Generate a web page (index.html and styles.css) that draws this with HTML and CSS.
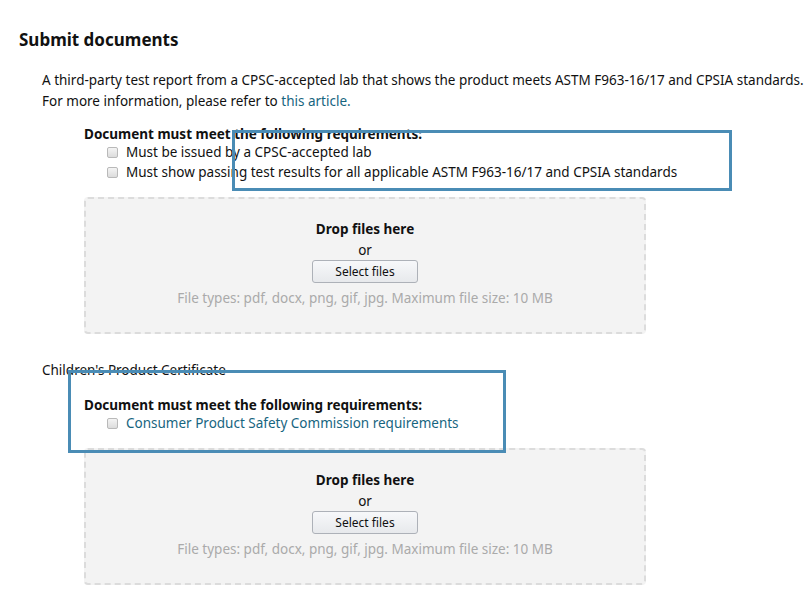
FILE: index.html
```html
<!doctype html>
<html lang="en">
  <head>
    <meta charset="UTF-8" />
    <meta name="viewport" content="width=device-width, initial-scale=1.0" />
    <title>Submit documents</title>
    <link rel="stylesheet" href="styles.css">
  </head>
  <body>
    <div class="page">
      <h1>Submit documents</h1>

      <!-- Test report -->
      <div class="doc">
        <p class="intro">
          A third-party test report from a CPSC-accepted lab that shows the product meets ASTM F963-16/17 and CPSIA standards.<br />
          For more information, please refer to <a href="#">this article.</a>
        </p>

        <div class="reqs">
          <div class="reqs-title">Document must meet the following requirements:</div>
          <label class="req"><input type="checkbox" /> Must be issued by a CPSC-accepted lab</label>
          <label class="req"><input type="checkbox" /> Must show passing test results for all applicable ASTM F963-16/17 and CPSIA standards</label>
        </div>

        <div class="dropzone">
          <div class="drop-title">Drop files here</div>
          <div class="drop-or">or</div>
          <button>Select files</button>
          <div class="drop-hint">File types: pdf, docx, png, gif, jpg. Maximum file size: 10 MB</div>
        </div>
      </div>

      <!-- Certificate -->
      <div class="doc doc-cert">
        <div class="doc-name">Children's Product Certificate</div>

        <div class="reqs">
          <div class="reqs-title">Document must meet the following requirements:</div>
          <label class="req"><input type="checkbox" /> <a href="#">Consumer Product Safety Commission requirements</a></label>
        </div>

        <div class="dropzone">
          <div class="drop-title">Drop files here</div>
          <div class="drop-or">or</div>
          <button>Select files</button>
          <div class="drop-hint">File types: pdf, docx, png, gif, jpg. Maximum file size: 10 MB</div>
        </div>
      </div>
    </div>

    <!-- highlight boxes drawn over the form -->
    <div class="mark mark-one"></div>
    <div class="mark mark-two"></div>
  </body>
</html>
```

FILE: styles.css
```css
body {
  margin: 0;
  font-family: "Noto Sans", Arial, sans-serif;
  font-size: 13.5px;
  color: #111;
  background: #fff;
}
.page {
  padding: 28px 0 0 19px;
}
h1 {
  margin: 0 0 18px;
  font-size: 17px;
  font-weight: bold;
  line-height: 24px;
}
.doc {
  padding-left: 23px;
}
.intro {
  margin: 0 0 12px;
  line-height: 21px;
}
a {
  color: #17657f;
  text-decoration: none;
}
.reqs {
  padding-left: 42px;
  line-height: 20px;
}
.reqs-title {
  font-weight: bold;
  margin-bottom: -2px;
}
.req {
  display: flex;
  align-items: center;
  padding-left: 23px;
}
.req input {
  appearance: none;
  margin: 0 8px 0 0;
  width: 11px;
  height: 11px;
  border: 1px solid #b9b9b9;
  border-radius: 2px;
  background: linear-gradient(#f4f4f4, #dcdcdc);
}
.dropzone {
  margin: 15px 0 0 42px;
  width: 558px;
  height: 133px;
  border: 2px dashed #dcdcdc;
  border-radius: 4px;
  background: #f3f3f3;
  text-align: center;
}
.drop-title {
  margin-top: 20px;
  font-weight: bold;
  line-height: 21px;
}
.drop-or {
  line-height: 20px;
}
button {
  font-family: inherit;
  font-size: 12px;
  width: 106px;
  height: 23px;
  padding: 0;
  color: #111;
  background: linear-gradient(#f7f8fa, #e7e9ec);
  border: 1px solid #adb1b8;
  border-radius: 3px;
  cursor: pointer;
}
.drop-hint {
  margin-top: 5px;
  color: #aaa;
  line-height: 20px;
}
.doc-cert {
  margin-top: 26px;
}
.doc-name {
  line-height: 20px;
  margin-bottom: 15px;
}
.mark {
  position: absolute;
  border: 3px solid #4a8cb5;
  box-sizing: border-box;
}
.mark-one {
  left: 232px;
  top: 130px;
  width: 500px;
  height: 61px;
}
.mark-two {
  left: 68px;
  top: 370px;
  width: 438px;
  height: 83px;
}
```
